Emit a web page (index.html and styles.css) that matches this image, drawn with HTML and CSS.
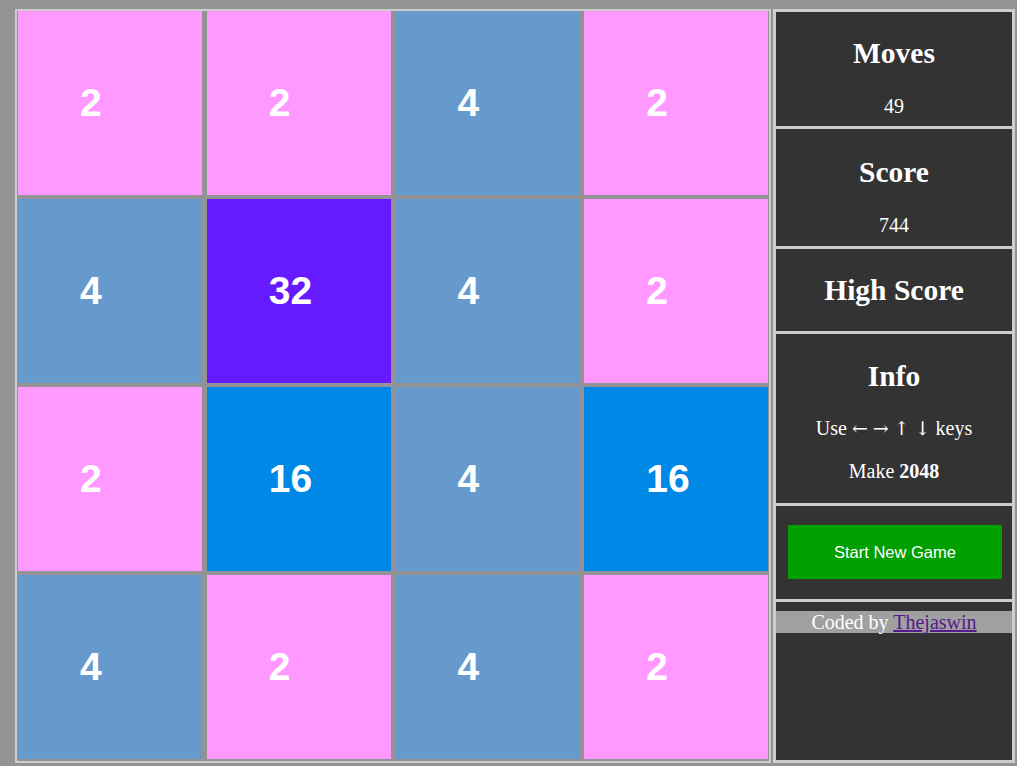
FILE: index.html
```html
<!DOCTYPE html>
<html lang="en">
<head>
<meta charset="utf-8">
<title>2048</title>
<link rel="stylesheet" href="styles.css">
</head>
<body>
<div class="page">
  <div class="board">
    <div class="tile t2">2</div>
    <div class="tile t2">2</div>
    <div class="tile t4">4</div>
    <div class="tile t2">2</div>
    <div class="tile t4">4</div>
    <div class="tile t32">32</div>
    <div class="tile t4">4</div>
    <div class="tile t2">2</div>
    <div class="tile t2">2</div>
    <div class="tile t16">16</div>
    <div class="tile t4">4</div>
    <div class="tile t16">16</div>
    <div class="tile t4">4</div>
    <div class="tile t2">2</div>
    <div class="tile t4">4</div>
    <div class="tile t2">2</div>
  </div>
  <div class="side">
    <div class="sec sec-moves">
      <h2 class="title">Moves</h2>
      <p class="val">49</p>
    </div>
    <div class="sec sec-score">
      <h2 class="title">Score</h2>
      <p class="val">744</p>
    </div>
    <div class="sec sec-high">
      <h2 class="title">High Score</h2>
    </div>
    <div class="sec sec-info">
      <h2 class="title">Info</h2>
      <p class="val val-use">Use <span class="arr">←</span> <span class="arr">→</span> <span class="arr">↑</span> <span class="arr">↓</span> keys</p>
      <p class="val val-make">Make <b>2048</b></p>
    </div>
    <div class="sec sec-btn">
      <button class="btn">Start New Game</button>
    </div>
    <div class="sec sec-foot">
      <p class="credit">Coded by <a class="link" href="#">Thejaswin</a></p>
    </div>
  </div>
</div>
</body>
</html>
```
FILE: styles.css
```css
html, body {
  margin: 0;
  padding: 0;
}
body {
  background: #939395;
  font-family: "Liberation Serif", "Times New Roman", serif;
  width: 1017px;
  height: 766px;
  overflow: hidden;
}
.page {
  display: flex;
  gap: 2px;
  padding: 9px 0 0 15px;
}
.board {
  box-sizing: border-box;
  width: 756px;
  height: 754px;
  border: 2px solid #cdcdcd;
  padding: 0 1px 2px 1px;
  display: grid;
  grid-template-columns: repeat(4, 1fr);
  grid-template-rows: repeat(4, 184px);
  column-gap: 5px;
  row-gap: 4px;
  background: #939395;
}
.tile {
  display: flex;
  align-items: center;
  padding-left: 62px;
  font-family: "Liberation Sans", Arial, sans-serif;
  font-weight: bold;
  font-size: 39px;
  color: #ffffff;
}
.t2 { background: #ff99ff; }
.t4 { background: #6699cc; }
.t16 { background: #0088e6; }
.t32 { background: #661aff; }

.side {
  box-sizing: border-box;
  width: 242px;
  height: 754px;
  border: 3px solid #cdcdcd;
  background: #333333;
  display: flex;
  flex-direction: column;
}
.sec {
  box-sizing: border-box;
  display: flex;
  flex-direction: column;
  align-items: center;
  color: #ffffff;
}
.sec + .sec {
  border-top: 3px solid #cdcdcd;
}
.title {
  margin: 0;
  font-size: 29.5px;
  line-height: 30px;
  font-weight: bold;
}
.val {
  margin: 28px 0 0 0;
  font-size: 20px;
  line-height: 20px;
}
.sec-moves { height: 114px; padding-top: 26px; }
.sec-score { height: 120px; padding-top: 28px; }
.sec-high { height: 85px; padding-top: 26px; }
.sec-info { height: 172px; padding-top: 27px; }
.val-use { margin-top: 27px; white-space: nowrap; }
.arr {
  font-family: "DejaVu Serif", serif;
  font-size: 19px;
}
.val-make { margin-top: 23px; }
.sec-btn { height: 96px; padding-top: 19px; }
.btn {
  width: 214px;
  height: 54px;
  margin-left: 2px;
  border: none;
  background: #00a000;
  color: #ffffff;
  font-family: "Liberation Sans", Arial, sans-serif;
  font-size: 16.5px;
}
.sec-foot {
  flex: 1;
  padding-top: 9px;
  align-items: stretch;
}
.credit {
  margin: 0;
  background: #a0a0a0;
  color: #ffffff;
  text-align: center;
  font-size: 20px;
  line-height: 22px;
  height: 22px;
}
.link {
  color: #551a8b;
  text-decoration: underline;
}
```
